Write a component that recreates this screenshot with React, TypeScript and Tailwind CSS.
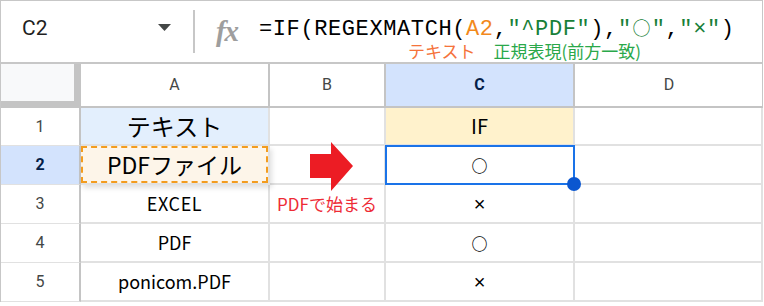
import React from "react";

const jp = { fontFamily: '"Noto Sans CJK JP", "Noto Sans", sans-serif' };
const rob = { fontFamily: 'Roboto, "Liberation Sans", sans-serif' };
const mono = { fontFamily: '"Liberation Mono", "DejaVu Sans Mono", "Noto Sans CJK JP", monospace' };
const lib = { fontFamily: '"Liberation Sans", Arial, sans-serif' };

function RowHead({ n, active, h }: { n: number; active?: boolean; h: string }) {
  return (
    <div
      className={`${h} flex items-center justify-center border-r-2 border-b border-r-[#c4c4c4] border-b-[#e1e1e1] text-[16px] ${
        active ? "bg-[#d3e3fd] font-bold text-[#041e49]" : "bg-white text-[#444746]"
      }`}
      style={rob}
    >
      {n}
    </div>
  );
}

function Cell({ children, cls = "", h }: { children?: React.ReactNode; cls?: string; h: string }) {
  return (
    <div className={`${h} relative flex items-center justify-center border-r-2 border-b-2 border-[#e1e1e1] text-black ${cls}`} style={jp}>
      {children}
    </div>
  );
}

function Maru() {
  return (
    <span className="text-[16px] font-bold leading-none" style={jp}>
      ○
    </span>
  );
}

function Batsu() {
  return (
    <span className="text-[20px] leading-none" style={lib}>
      ×
    </span>
  );
}

export default function App() {
  const rowH = ["h-[38px]", "h-[39px]", "h-[39px]", "h-[39px]", "h-[39px]"];
  return (
    <div className="w-[764px] h-[306px] overflow-hidden bg-white">
      <div className="w-[763px] border-l border-t border-r border-[#c7c7c7]">
        {/* formula bar */}
        <div className="relative h-[63px] flex items-center border-b-2 border-[#c7c7c7]">
          <div className="w-[192px] flex items-center pl-[21px] pr-[22px] justify-between">
            <span className="text-[21px] text-[#1f1f1f] mt-[-6px]" style={rob}>C2</span>
            <svg width="13" height="8" viewBox="0 0 13 8" className="mt-[-8px]">
              <path d="M0 0 L13 0 L6.5 7 Z" fill="#444746" />
            </svg>
          </div>
          <div className="w-[2px] h-[43px] bg-[#c7c7c7]" />
          <div className="w-[64px] flex items-center justify-center">
            <span className="text-[29px] italic font-bold text-[#9e9e9e] tracking-[-1px] leading-none" style={{ fontFamily: '"Liberation Serif", serif' }}>
              fx
            </span>
          </div>
          <div className="flex flex-col">
            <div className="text-[22px] leading-[22px] mt-[-7px] tracking-[0.6px] text-black whitespace-nowrap" style={mono}>
              =IF(REGEXMATCH(<span className="text-[#f2891c]">A2</span>,<span className="text-[#188038]">"^PDF"</span>),
              <span className="text-[#188038]">"<span className="inline-flex w-[20px] justify-center text-[18px] leading-[22px]" style={jp}>○</span>"</span>,<span className="text-[#188038]">"×"</span>)
            </div>
          </div>
          <div className="absolute left-[407px] top-[41px] flex text-[17px] leading-[17px]" style={jp}>
            <span className="text-[#f5733a]">テキスト</span>
            <span className="ml-[18px] text-[#2aa84a]">正規表現(前方一致)</span>
          </div>
        </div>

        {/* grid */}
        <div className="grid grid-cols-[80px_189px_116px_189px_188px]">
          {/* header row */}
          <div className="h-[44px] bg-[#c4c4c4] pr-[7px] pb-[7px]">
            <div className="w-full h-full bg-[#f8f9fa]" />
          </div>
          <div className="h-[44px] flex items-center justify-center border-r-2 border-b-2 border-[#c4c4c4] text-[16px] text-[#444746]" style={rob}>A</div>
          <div className="h-[44px] flex items-center justify-center border-r-2 border-b-2 border-[#c4c4c4] text-[16px] text-[#444746]" style={rob}>B</div>
          <div className="h-[44px] flex items-center justify-center border-r-2 border-b-2 border-[#c4c4c4] bg-[#d3e3fd] text-[16px] font-bold text-[#041e49]" style={rob}>C</div>
          <div className="h-[44px] flex items-center justify-center border-b-2 border-[#c4c4c4] text-[16px] text-[#444746]" style={rob}>D</div>

          {/* row 1 */}
          <RowHead n={1} h={rowH[0]} />
          <Cell h={rowH[0]} cls="bg-[#e3effd] text-[24px]">テキスト</Cell>
          <Cell h={rowH[0]} />
          <Cell h={rowH[0]} cls="bg-[#fff2cc] text-[20px]">IF</Cell>
          <Cell h={rowH[0]} cls="border-r-0" />

          {/* row 2 */}
          <RowHead n={2} active h={rowH[1]} />
          <Cell h={rowH[1]} cls="bg-[#fdf5e9] text-[23px] shadow-[2px_3px_5px_rgba(0,0,0,0.12)] z-10">
            <div className="absolute inset-0 border-2 border-dashed border-[#f39c1e]" />
            <span className="relative">PDFファイル</span>
          </Cell>
          <Cell h={rowH[1]}>
            <svg width="44" height="50" viewBox="0 0 44 50" className="absolute left-[40px] top-[-4px]">
              <path d="M0 12 L21 12 L21 0 L43 24 L21 49 L21 36 L0 36 Z" fill="#ec1c24" />
            </svg>
          </Cell>
          <Cell h={rowH[1]} cls="z-10">
            <div className="absolute left-[-1px] top-[-1px] right-[-2px] bottom-[-2px] border-2 border-[#1a73e8]" />
            <span className="relative"><Maru /></span>
            <div className="absolute right-[-8px] bottom-[-8px] w-[14px] h-[14px] rounded-full bg-[#0b57d0]" />
          </Cell>
          <Cell h={rowH[1]} cls="border-r-0" />

          {/* row 3 */}
          <RowHead n={3} h={rowH[2]} />
          <Cell h={rowH[2]} cls="text-[18px] tracking-[0.6px]">EXCEL</Cell>
          <Cell h={rowH[2]} cls="text-[17px] whitespace-nowrap">
            <span className="text-[#ee2b36]">PDFで始まる</span>
          </Cell>
          <Cell h={rowH[2]}><Batsu /></Cell>
          <Cell h={rowH[2]} cls="border-r-0" />

          {/* row 4 */}
          <RowHead n={4} h={rowH[3]} />
          <Cell h={rowH[3]} cls="text-[18px]">PDF</Cell>
          <Cell h={rowH[3]} />
          <Cell h={rowH[3]}><Maru /></Cell>
          <Cell h={rowH[3]} cls="border-r-0" />

          {/* row 5 */}
          <RowHead n={5} h={rowH[4]} />
          <Cell h={rowH[4]} cls="text-[18px]">ponicom.PDF</Cell>
          <Cell h={rowH[4]} />
          <Cell h={rowH[4]}><Batsu /></Cell>
          <Cell h={rowH[4]} cls="border-r-0" />
        </div>
      </div>
    </div>
  );
}
